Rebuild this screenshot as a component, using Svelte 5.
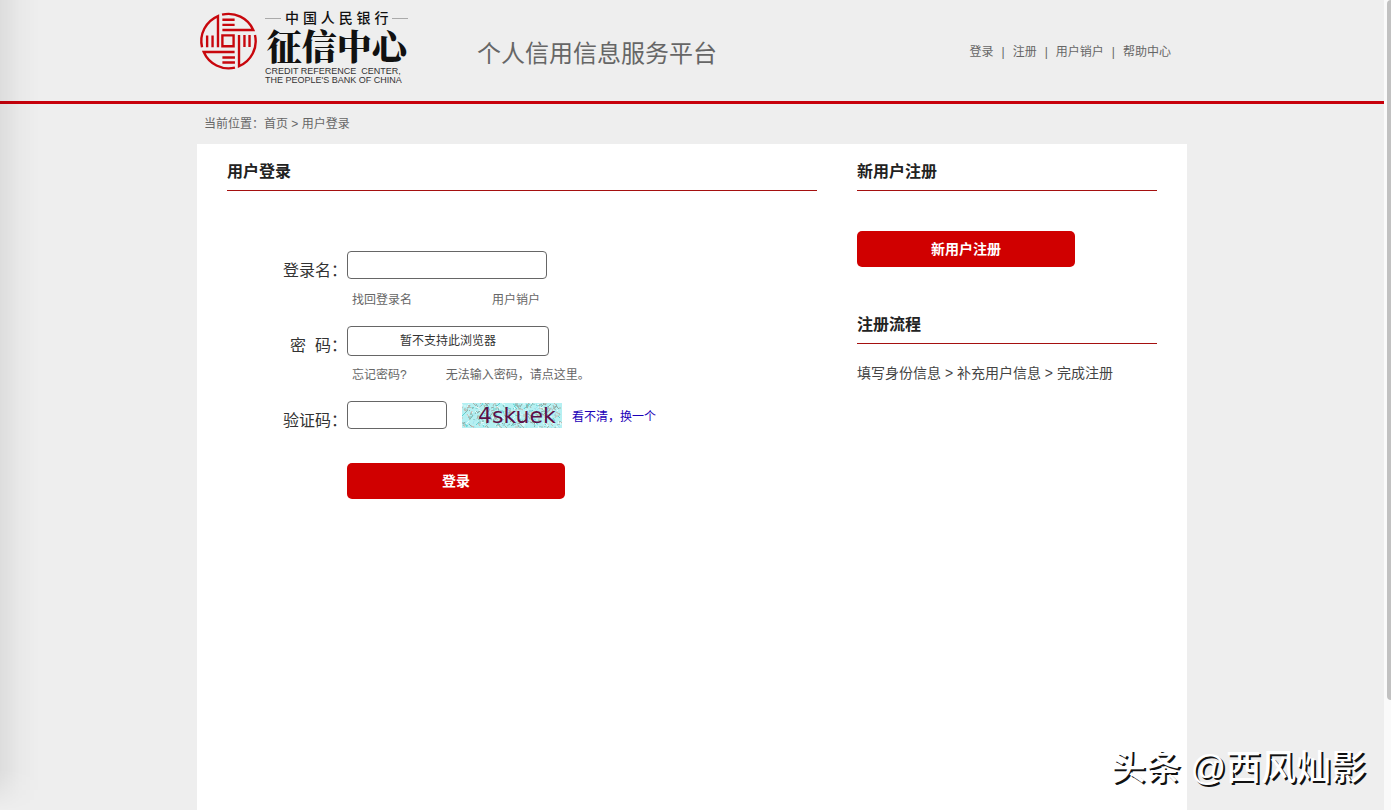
<script>
	let loginName = $state('');
	let captcha = $state('');

	const navLinks = ['登录', '注册', '用户销户', '帮助中心'];

	// small deterministic generator for the captcha speckles
	let seed = 7;
	function rand(max) {
		seed = (seed * 16807) % 2147483647;
		return seed % max;
	}

	const colors = ['#8fa9a4', '#5fd3d3', '#c9b8b0', '#e8fbfb', '#7fb8b0', '#a3e3ee', '#a9b5ac'];
	const noise = Array.from({ length: 420 }, () => {
		const x = rand(100);
		const y = rand(25);
		return { x, y, x2: x + rand(7) - 3, y2: y + rand(7) - 3, color: colors[rand(colors.length)] };
	});
</script>

<div class="window">
	<div class="page">
		<header class="header">
			<div class="container header-inner">
				<a class="logo" href="#home">
					<svg class="seal" viewBox="0 0 168 168" aria-hidden="true">
						<g fill="none" stroke="#c8070d" stroke-width="7">
							<path d="M66 66H99V98H66Z" />
							<path d="M53 101V9A80 80 0 0 0 6 101" />
							<path d="M66 50H157A80 80 0 0 0 65 5" />
							<path d="M115 65V157A80 80 0 0 0 162 65" />
							<path d="M102 115H11A80 80 0 0 0 103 161" />
							<path d="M21 66V101M37 66V101" />
							<path d="M66 20H102M66 35H102" />
							<path d="M131 65V100M146 65V100" />
							<path d="M66 131H103M66 146H103" />
						</g>
					</svg>
					<span class="logo-text">
						<span class="bank">中 国 人 民 银 行</span>
						<strong>征信中心</strong>
						<small>CREDIT REFERENCE &nbsp;CENTER,<br />THE PEOPLE'S BANK OF CHINA</small>
					</span>
				</a>
				<h1>个人信用信息服务平台</h1>
				<nav>
					{#each navLinks as link, i}
						{#if i > 0}<span>|</span>{/if}
						<a href="#nav">{link}</a>
					{/each}
				</nav>
			</div>
		</header>

		<div class="container crumbs">当前位置：<a href="#home">首页</a> &gt; 用户登录</div>

		<main class="container panel">
			<section>
				<h2>用户登录</h2>
				<form onsubmit={(e) => e.preventDefault()}>
					<div class="row">
						<label for="loginname">登录名：</label>
						<div>
							<input id="loginname" type="text" bind:value={loginName} />
							<div class="hints wide">
								<a href="#find">找回登录名</a>
								<a href="#cancel">用户销户</a>
							</div>
						</div>
					</div>
					<div class="row">
						<label for="password">密&nbsp;&nbsp;码：</label>
						<div>
							<input id="password" class="unsupported" type="text" value="暂不支持此浏览器" readonly />
							<div class="hints">
								<a href="#forgot">忘记密码?</a>
								<a href="#help">无法输入密码，请点这里。</a>
							</div>
						</div>
					</div>
					<div class="row">
						<label for="captcha">验证码：</label>
						<div class="captcha">
							<input id="captcha" type="text" bind:value={captcha} />
							<svg viewBox="0 0 100 25" role="img" aria-label="4skuek">
								<rect width="100" height="25" fill="#b5f0f2" />
								{#each noise as n}
									<line x1={n.x} y1={n.y} x2={n.x2} y2={n.y2} stroke={n.color} stroke-width="1" />
								{/each}
								<text x="16" y="20">4skuek</text>
							</svg>
							<a href="#refresh">看不清，换一个</a>
						</div>
					</div>
					<button class="btn submit" type="submit">登录</button>
				</form>
			</section>

			<aside>
				<h2>新用户注册</h2>
				<button class="btn register" type="button">新用户注册</button>
				<h2>注册流程</h2>
				<p>填写身份信息 &gt; 补充用户信息 &gt; 完成注册</p>
			</aside>
		</main>
	</div>

	<div class="scrollbar"><div class="thumb"></div></div>
	<div class="watermark">头条 @西风灿影</div>
</div>

<style>
	:global(body) {
		background: #eee;
		font-family: "Liberation Sans", "Noto Sans CJK SC", sans-serif;
		font-size: 12px;
		color: #666;
	}

	a {
		color: inherit;
		text-decoration: none;
	}

	.window {
		position: relative;
		display: flex;
		min-height: 100vh;
	}

	/* soft shade down the left edge */
	.window::before {
		content: "";
		position: absolute;
		left: 0;
		top: 0;
		bottom: 0;
		width: 40px;
		background: linear-gradient(to right, rgba(0, 0, 0, 0.07), rgba(0, 0, 0, 0.02) 50%, rgba(0, 0, 0, 0));
		mask-image: linear-gradient(to top, transparent, #000 40px);
		pointer-events: none;
	}

	.page {
		flex: 1;
		display: flex;
		flex-direction: column;
	}

	.container {
		box-sizing: border-box;
		width: 100%;
		max-width: 990px;
		margin: 0 auto;
	}

	.header {
		border-bottom: 3px solid #c7000b;
	}

	.header-inner {
		display: flex;
		height: 101px;
	}

	.logo {
		display: flex;
		gap: 8px;
		width: 280px;
		padding-left: 3px;
		box-sizing: border-box;
		color: #111;
	}

	.seal {
		width: 57px;
		height: 57px;
		margin-top: 13px;
		overflow: visible;
	}

	.logo-text {
		display: flex;
		flex-direction: column;
		padding-top: 10px;
		white-space: nowrap;
	}

	.bank {
		display: flex;
		align-items: center;
		justify-content: center;
		gap: 4px;
		font-size: 14px;
		font-weight: 500;
		line-height: 16px;
	}

	.bank::before,
	.bank::after {
		content: "";
		width: 16px;
		height: 1px;
		background: #aaa;
	}

	.logo strong {
		font-family: "Noto Serif CJK SC", "Noto Sans CJK SC", serif;
		font-size: 35px;
		font-weight: 900;
		line-height: 38px;
		text-align: center;
	}

	.logo small {
		font-size: 9px;
		line-height: 9px;
		padding-top: 3px;
		color: #333;
	}

	h1 {
		margin: 0;
		font-size: 24px;
		font-weight: normal;
		line-height: 108px;
	}

	nav {
		display: flex;
		gap: 8px;
		margin-left: auto;
		padding-right: 16px;
		line-height: 104px;
	}

	.crumbs {
		padding: 0 7px;
		line-height: 40px;
	}

	.panel {
		flex: 1;
		display: grid;
		grid-template-columns: 1fr 300px;
		gap: 40px;
		padding: 10px 30px;
		background: #fff;
	}

	h2 {
		margin: 0;
		border-bottom: 1px solid #a5100f;
		color: #222;
		font-size: 16px;
		line-height: 36px;
	}

	form {
		padding-top: 60px;
	}

	.row {
		display: grid;
		grid-template-columns: 120px 1fr;
		min-height: 75px;
	}

	label {
		color: #333;
		font-size: 16px;
		line-height: 40px;
		text-align: right;
	}

	input {
		display: block;
		box-sizing: border-box;
		width: 200px;
		height: 28px;
		padding: 0 8px;
		border: 1px solid #666;
		border-radius: 4px;
		background: #fff;
		color: #333;
		font: inherit;
	}

	.unsupported {
		width: 202px;
		height: 30px;
		margin-bottom: -2px;
		padding-bottom: 3px;
		text-align: center;
	}

	.hints {
		display: flex;
		gap: 39px;
		padding: 12px 0 0 5px;
		line-height: 18px;
	}

	.wide {
		gap: 80px;
	}

	.captcha {
		display: flex;
		align-items: flex-start;
		line-height: 32px;
	}

	.captcha input {
		width: 100px;
	}

	.captcha svg {
		width: 100px;
		height: 25px;
		margin: 2px 10px 0 15px;
	}

	.captcha text {
		font-family: "DejaVu Sans", sans-serif;
		font-size: 22px;
		fill: #5c1048;
	}

	.captcha a {
		color: #1c00b8;
	}

	.btn {
		display: block;
		width: 218px;
		height: 36px;
		padding: 0 0 2px;
		border: none;
		border-radius: 5px;
		background: #d00000;
		color: #fff;
		font: inherit;
		font-size: 14px;
		font-weight: bold;
		cursor: pointer;
	}

	.submit {
		margin: -13px 0 0 120px;
	}

	.register {
		margin: 40px 0;
	}

	aside p {
		margin: 19px 0;
		color: #444;
		font-size: 14px;
		line-height: 20px;
	}

	.scrollbar {
		width: 7px;
		background: #fafafa;
	}

	.thumb {
		width: 4px;
		height: 700px;
		margin-left: auto;
		border-radius: 4px 0 0 4px;
		background: #c1c1c1;
	}

	.watermark {
		position: absolute;
		right: 25px;
		bottom: 18px;
		color: #fff;
		font-size: 35px;
		font-weight: 500;
		line-height: 48px;
		text-shadow: 2px 2px 0 #111;
	}
</style>
